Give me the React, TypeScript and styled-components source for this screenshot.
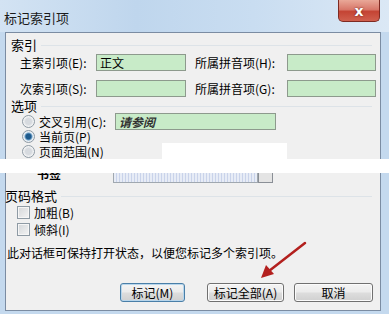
import React from "react";
import styled, { createGlobalStyle } from "styled-components";

const GlobalStyle = createGlobalStyle`
  html, body {
    margin: 0;
    padding: 0;
    background: #ffffff;
  }
  body {
    width: 389px;
    height: 314px;
    overflow: hidden;
    font-family: "Noto Sans CJK SC", "Noto Sans", sans-serif;
    font-size: 12px;
    color: #000;
  }
`;

const Page = styled.div`
  position: relative;
  width: 389px;
  height: 314px;
  display: flex;
  flex-direction: column;
`;

const TitleBar = styled.div`
  height: 32px;
  display: flex;
  align-items: flex-start;
  justify-content: space-between;
  background: linear-gradient(
    to right,
    #d3e3f3 0%,
    #bfd6ed 35%,
    #c9ddf1 65%,
    #dbe8f5 100%
  );
`;

const Title = styled.div`
  margin: 10px 0 0 4px;
  font-size: 13px;
  line-height: 16px;
  color: #1a1a1a;
`;

const CloseButton = styled.div`
  width: 42px;
  height: 22px;
  margin-right: 9px;
  box-sizing: border-box;
  border: 1px solid #7e2a22;
  border-top: none;
  border-radius: 0 0 5px 5px;
  background: linear-gradient(
    to bottom,
    #e9a898 0%,
    #d8786a 45%,
    #c44434 55%,
    #d0604e 100%
  );
  display: flex;
  align-items: center;
  justify-content: center;
  color: #fff;
  font-family: "DejaVu Sans", sans-serif;
  font-weight: bold;
  font-size: 14px;
  text-shadow: 0 0 2px #5a1a14;
`;

const Frame = styled.div<{ $bottom?: boolean }>`
  display: flex;
  padding: ${(p) => (p.$bottom ? "0 8px 3px 5px" : "0 8px 0 5px")};
  background: #c4d9ee;
  flex: ${(p) => (p.$bottom ? 1 : "none")};
`;

const Client = styled.div<{ $bottom?: boolean }>`
  flex: 1;
  background: #f0f0f0;
  border: 1px solid #7b8ca2;
  border-top: ${(p) => (p.$bottom ? "none" : "1px solid #7b8ca2")};
  border-bottom: ${(p) => (p.$bottom ? "1px solid #7b8ca2" : "none")};
  display: flex;
  flex-direction: column;
`;

const GroupTitle = styled.div<{ $left: number; $top: number }>`
  display: flex;
  align-items: center;
  gap: 4px;
  height: 16px;
  margin: ${(p) => `${p.$top}px 8px 0 ${p.$left}px`};
  font-size: 13px;
  &::after {
    content: "";
    flex: 1;
    height: 1px;
    background: #dde3e8;
    margin-top: 3px;
  }
`;

const FieldRow = styled.div<{ $top: number }>`
  display: flex;
  align-items: center;
  height: 17px;
  margin-top: ${(p) => p.$top}px;
`;

const Label = styled.div<{ $width: number; $left: number }>`
  width: ${(p) => p.$width}px;
  margin-left: ${(p) => p.$left}px;
  white-space: nowrap;
  font-size: 12px;
`;

const GreenInput = styled.div<{ $width: number; $italic?: boolean }>`
  width: ${(p) => p.$width}px;
  height: 17px;
  box-sizing: border-box;
  border: 1px solid #8d9a8d;
  background: #c8ebc8;
  padding-left: 3px;
  font-size: 12px;
  line-height: 15px;
  font-style: ${(p) => (p.$italic ? "italic" : "normal")};
  font-weight: ${(p) => (p.$italic ? "bold" : "normal")};
  color: ${(p) => (p.$italic ? "#333" : "#000")};
`;

const OptionRow = styled.div<{ $height: number; $top?: number }>`
  display: flex;
  align-items: center;
  height: ${(p) => p.$height}px;
  margin-top: ${(p) => p.$top ?? 0}px;
`;

const Radio = styled.span<{ $checked?: boolean }>`
  width: 11px;
  height: 11px;
  margin: 0 4px 0 16px;
  border-radius: 50%;
  border: 1px solid #8e9aa4;
  background: ${(p) =>
    p.$checked
      ? "radial-gradient(circle, #1e5a8c 0 2.5px, #6fa0c8 3.5px, #e8eef3 4.5px)"
      : "radial-gradient(circle, #d6dadf 0 3px, #f2f3f4 5px)"};
  flex: none;
`;

const Checkbox = styled.span`
  width: 11px;
  height: 11px;
  margin: 0 4px 0 11px;
  border: 1px solid #8e9aa4;
  background: linear-gradient(135deg, #d3d6d9, #f4f4f4);
  box-shadow: inset 0 0 0 1px #f6f6f6;
  flex: none;
`;

const OptionText = styled.span`
  font-size: 12px;
  line-height: 13px;
  white-space: nowrap;
`;

const CrossInput = styled(GreenInput)`
  margin-left: 9px;
`;

const WhiteBlock = styled.div<{ $left: number; $width: number }>`
  align-self: stretch;
  margin-left: ${(p) => p.$left}px;
  width: ${(p) => p.$width}px;
  background: #ffffff;
`;

const Band = styled.div`
  height: 14px;
  background: #ffffff;
`;

const CutRow = styled.div`
  display: flex;
  align-items: flex-start;
  height: 11px;
  overflow: hidden;
`;

const CutLabel = styled.div`
  margin-left: 31px;
  width: 76px;
  height: 8px;
  overflow: hidden;
  line-height: 2px;
  font-size: 12px;
  font-weight: bold;
`;

const CutInput = styled.div`
  width: 145px;
  height: 10px;
  box-sizing: border-box;
  border: 1px solid #a0a8b0;
  border-top: none;
  background: repeating-linear-gradient(
    to right,
    #e7ecf6 0 2px,
    #c9d3ea 2px 3px
  );
`;

const CutDrop = styled.div`
  width: 15px;
  height: 10px;
  box-sizing: border-box;
  border: 1px solid #8a8f96;
  border-top: none;
  background: #e4e4e4;
`;

const Note = styled.div`
  margin: 7px 0 0 1px;
  height: 16px;
  line-height: 16px;
  font-size: 12px;
  white-space: nowrap;
`;

const ButtonBar = styled.div`
  display: flex;
  margin: 22px 0 0 114px;
`;

const Button = styled.div<{ $width: number; $gap: number; $default?: boolean }>`
  width: ${(p) => p.$width}px;
  height: 19px;
  margin-left: ${(p) => p.$gap}px;
  box-sizing: border-box;
  border: 1px solid ${(p) => (p.$default ? "#4a7fa8" : "#707070")};
  border-radius: 3px;
  background: linear-gradient(
    to bottom,
    #f4f4f4 0%,
    #ebebeb 48%,
    #dddddd 52%,
    #d0d0d0 100%
  );
  box-shadow: inset 0 0 0 1px
    ${(p) => (p.$default ? "#b8d6ec" : "#fbfbfb")};
  display: flex;
  align-items: center;
  justify-content: center;
  font-size: 12px;
  white-space: nowrap;
`;

const Arrow = styled.svg`
  position: absolute;
  left: 255px;
  top: 236px;
  width: 60px;
  height: 50px;
  pointer-events: none;
`;

export default function App() {
  return (
    <Page>
      <GlobalStyle />
      <TitleBar>
        <Title>标记索引项</Title>
        <CloseButton>x</CloseButton>
      </TitleBar>

      <Frame>
        <Client>
          <GroupTitle $left={5} $top={3}>
            索引
          </GroupTitle>
          <FieldRow $top={2}>
            <Label $left={14} $width={76}>
              主索引项(E):
            </Label>
            <GreenInput $width={90}>正文</GreenInput>
            <Label $left={9} $width={92}>
              所属拼音项(H):
            </Label>
            <GreenInput $width={89} />
          </FieldRow>
          <FieldRow $top={9}>
            <Label $left={14} $width={76}>
              次索引项(S):
            </Label>
            <GreenInput $width={90} />
            <Label $left={9} $width={92}>
              所属拼音项(G):
            </Label>
            <GreenInput $width={89} />
          </FieldRow>
          <GroupTitle $left={5} $top={0}>
            选项
          </GroupTitle>
          <OptionRow $height={17}>
            <Radio />
            <OptionText>交叉引用(C):</OptionText>
            <CrossInput $width={161} $italic>
              请参阅
            </CrossInput>
          </OptionRow>
          <OptionRow $height={13}>
            <Radio $checked />
            <OptionText>当前页(P)</OptionText>
          </OptionRow>
          <OptionRow $height={16}>
            <Radio />
            <OptionText>页面范围(N)</OptionText>
            <WhiteBlock $left={58} $width={125} />
          </OptionRow>
        </Client>
      </Frame>

      <Band />

      <Frame $bottom>
        <Client $bottom>
          <CutRow>
            <CutLabel>书签</CutLabel>
            <CutInput />
            <CutDrop />
          </CutRow>
          <GroupTitle $left={-1} $top={3}>
            页码格式
          </GroupTitle>
          <OptionRow $height={17} $top={1}>
            <Checkbox />
            <OptionText>加粗(B)</OptionText>
          </OptionRow>
          <OptionRow $height={17}>
            <Checkbox />
            <OptionText>倾斜(I)</OptionText>
          </OptionRow>
          <Note>此对话框可保持打开状态，以便您标记多个索引项。</Note>
          <ButtonBar>
            <Button $width={65} $gap={0} $default>
              标记(M)
            </Button>
            <Button $width={77} $gap={22}>
              标记全部(A)
            </Button>
            <Button $width={79} $gap={10}>
              取消
            </Button>
          </ButtonBar>
        </Client>
      </Frame>

      <Arrow viewBox="0 0 60 50">
        <line
          x1="50"
          y1="7"
          x2="14"
          y2="35"
          stroke="#b3201e"
          strokeWidth="2.5"
          strokeLinecap="round"
        />
        <polygon points="6,42 11,29 19,38" fill="#b3201e" />
      </Arrow>
    </Page>
  );
}
